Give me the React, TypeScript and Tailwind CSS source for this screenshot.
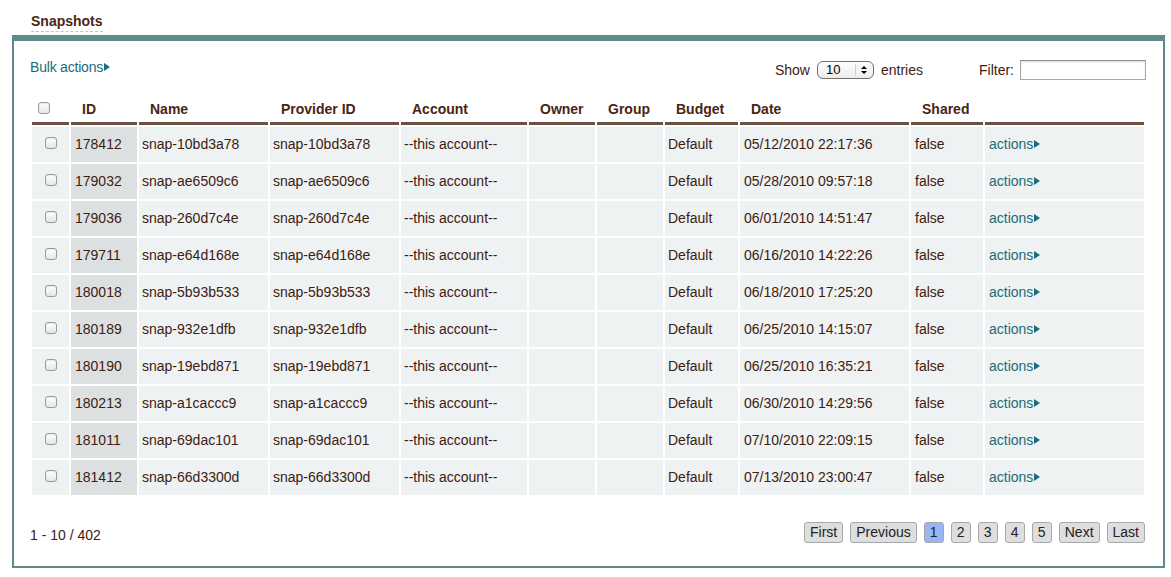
import React from "react";

const rows = [
  ["178412", "snap-10bd3a78", "05/12/2010 22:17:36"],
  ["179032", "snap-ae6509c6", "05/28/2010 09:57:18"],
  ["179036", "snap-260d7c4e", "06/01/2010 14:51:47"],
  ["179711", "snap-e64d168e", "06/16/2010 14:22:26"],
  ["180018", "snap-5b93b533", "06/18/2010 17:25:20"],
  ["180189", "snap-932e1dfb", "06/25/2010 14:15:07"],
  ["180190", "snap-19ebd871", "06/25/2010 16:35:21"],
  ["180213", "snap-a1caccc9", "06/30/2010 14:29:56"],
  ["181011", "snap-69dac101", "07/10/2010 22:09:15"],
  ["181412", "snap-66d3300d", "07/13/2010 23:00:47"],
];

const headers = [
  { label: "", w: "w-[37px]" },
  { label: "ID", w: "w-[66px]" },
  { label: "Name", w: "w-[129px]" },
  { label: "Provider ID", w: "w-[129px]" },
  { label: "Account", w: "w-[126px]" },
  { label: "Owner", w: "w-[66px]" },
  { label: "Group", w: "w-[66px]" },
  { label: "Budget", w: "w-[73px]" },
  { label: "Date", w: "w-[169px]" },
  { label: "Shared", w: "w-[72px]" },
  { label: "", w: "" },
];

const Arrow = () => (
  <span className="inline-block ml-[1px] w-0 h-0 border-y-[4px] border-y-transparent border-l-[6px] border-l-[#1d6b78] align-middle relative -top-[1px]" />
);

const Check = () => (
  <span className="inline-block w-[12px] h-[12px] rounded-[3px] border border-[#9a9a9a] bg-gradient-to-b from-white to-[#e6e6e6] shadow-[inset_0_1px_1px_rgba(0,0,0,0.08)]" />
);

const pages = ["First", "Previous", "1", "2", "3", "4", "5", "Next", "Last"];

export default function App() {
  return (
    <div
      className="w-[1171px] h-[577px] bg-white text-[14px] text-[#3d2011]"
      style={{ fontFamily: '"Liberation Sans", Arial, sans-serif' }}
    >
      {/* heading */}
      <div className="h-[35px] pl-[31px] pt-[11px]">
        <span className="inline-block font-bold text-[#4a2512] leading-[17px] pb-[1px] border-b border-dashed border-[#c4c4c4]">
          Snapshots
        </span>
      </div>

      {/* panel */}
      <div className="ml-[12px] w-[1153px] border-t-[6px] border-t-[#5f8b8d] border-x-2 border-b-2 border-x-[#5f8b8d] border-b-[#5f8b8d] pl-[16px] pr-[17px] pt-[18px] pb-[23px]">
        {/* toolbar */}
        <div className="flex items-start h-[22px]">
          <a className="text-[#1d6b78] leading-[16px] tracking-[-0.2px]">
            Bulk actions
            <Arrow />
          </a>
          <div className="ml-auto flex items-center h-[20px] mt-[1px]">
            <span>Show</span>
            <div className="ml-[7px] w-[57px] h-[18px] rounded-[6px] border border-[#6f6f6f] bg-gradient-to-b from-white to-[#ececec] flex items-center text-[13px] text-black">
              <span className="pl-[8px] flex-1">10</span>
              <span className="w-px h-[12px] bg-[#cfcfcf]" />
              <span className="w-[17px] flex flex-col items-center gap-[2px]">
                <span className="w-0 h-0 border-x-[3px] border-x-transparent border-b-[3px] border-b-black" />
                <span className="w-0 h-0 border-x-[3px] border-x-transparent border-t-[3px] border-t-black" />
              </span>
            </div>
            <span className="ml-[7px]">entries</span>
            <span className="ml-[56px]">Filter:</span>
            <div className="ml-[6px] w-[126px] h-[20px] border border-[#a9a9a9] border-t-[#8c8c8c] shadow-[inset_0_1px_2px_rgba(0,0,0,0.15)] bg-white" />
          </div>
        </div>

        {/* table */}
        <table className="mt-[13px] w-full table-fixed border-separate border-spacing-[2px]">
          <thead>
            <tr>
              {headers.map((h, i) => (
                <th
                  key={i}
                  className={`${h.w} h-[29px] border-b-[3px] border-b-[#6b5242] text-left font-bold text-[#4a2512] align-middle ${
                    i === 0 ? "text-center pl-[6px]" : "pl-[11px]"
                  }`}
                >
                  {i === 0 ? <Check /> : h.label}
                </th>
              ))}
            </tr>
          </thead>
          <tbody>
            {rows.map(([id, snap, date]) => (
              <tr key={id} className="h-[35px]">
                <td className="bg-[#eef2f2] text-center align-middle">
                  <Check />
                </td>
                <td className="bg-[#dde0e0] pl-[4px]">{id}</td>
                <td className="bg-[#eef2f2] pl-[3px]">{snap}</td>
                <td className="bg-[#eef2f2] pl-[3px]">{snap}</td>
                <td className="bg-[#eef2f2] pl-[3px]">--this account--</td>
                <td className="bg-[#eef2f2]" />
                <td className="bg-[#eef2f2]" />
                <td className="bg-[#eef2f2] pl-[3px]">Default</td>
                <td className="bg-[#eef2f2] pl-[4px]">{date}</td>
                <td className="bg-[#eef2f2] pl-[4px]">false</td>
                <td className="bg-[#eef2f2] pl-[4px]">
                  <a className="text-[#1d6b78]">
                    actions
                    <Arrow />
                  </a>
                </td>
              </tr>
            ))}
          </tbody>
        </table>

        {/* footer */}
        <div className="mt-[25px] flex items-end">
          <span className="leading-[17px] mb-[-1px]">1 - 10 / 402</span>
          <div className="ml-auto flex gap-[7px] mr-[1px]">
            {pages.map((p) => (
              <span
                key={p}
                className={`h-[21px] leading-[19px] rounded-[3px] border border-[#a8a8a8] text-[#222] ${
                  p === "1" ? "bg-[#9ab6f2]" : "bg-[#dedede]"
                } ${p.length === 1 ? "min-w-[20px] text-center" : "px-[5px]"}`}
              >
                {p}
              </span>
            ))}
          </div>
        </div>
      </div>
    </div>
  );
}
